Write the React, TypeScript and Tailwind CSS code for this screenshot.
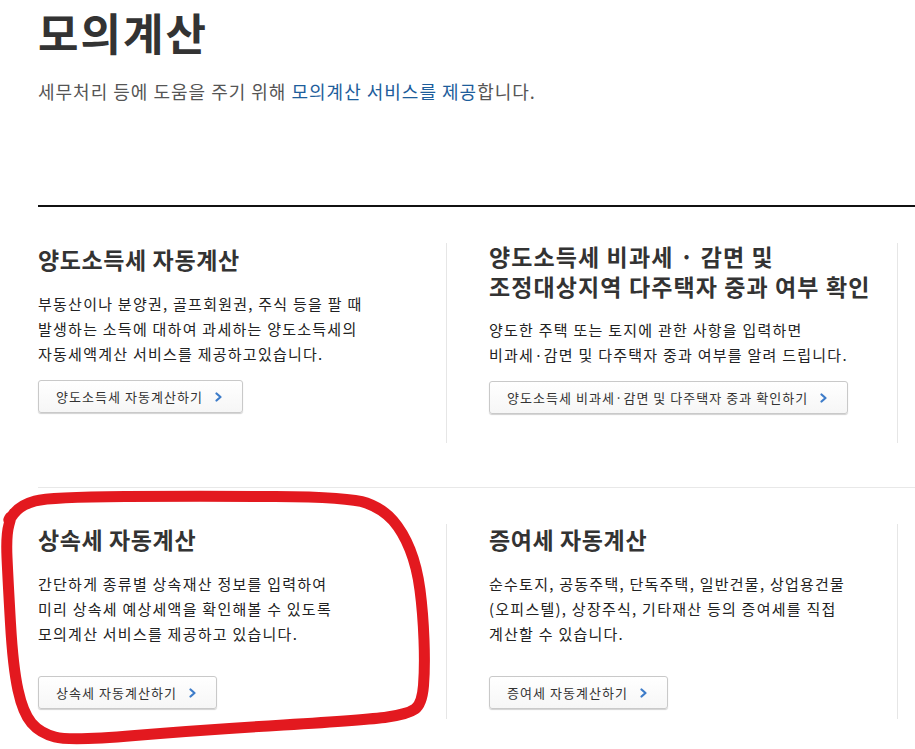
import React from 'react';

const font = { fontFamily: '"Noto Sans CJK KR", "Noto Sans", sans-serif' };

// freehand red mark drawn over the lower-left card
const markPoints: [number, number][] = [
  [7, 523], [20, 505], [50, 497], [200, 496], [350, 497], [383, 509], [403, 532],
  [417, 567], [423, 613], [425, 667], [422, 704], [408, 714], [367, 720], [200, 730],
  [70, 741], [40, 733], [23, 713], [13, 667], [8, 580], [6, 535], [12, 514],
];

const smoothPath = (pts: [number, number][]) => {
  let d = `M ${(pts[0][0] + pts[1][0]) / 2} ${(pts[0][1] + pts[1][1]) / 2}`;
  for (let i = 1; i <= pts.length; i++) {
    const p = pts[i % pts.length];
    const n = pts[(i + 1) % pts.length];
    d += ` Q ${p[0]} ${p[1]} ${(p[0] + n[0]) / 2} ${(p[1] + n[1]) / 2}`;
  }
  return d;
};

const Chevron = () => (
  <svg width="8" height="10" viewBox="0 0 8 10" className="ml-[12px]">
    <polyline points="1.5,1.5 5.5,5 1.5,8.5" fill="none" stroke="#3d7cc9" strokeWidth="2.2" strokeLinecap="round" strokeLinejoin="round" />
  </svg>
);

const CalcButton: React.FC<{ label: string }> = ({ label }) => (
  <button className="inline-flex items-center h-[33px] pl-[17px] pr-[19px] border border-[#c9c9c9] rounded-[3px] bg-gradient-to-b from-white to-[#f6f6f6] shadow-[0_1px_1px_rgba(0,0,0,0.18)] text-[13px] text-[#333] tracking-[1.05px]">
    {label}
    <Chevron />
  </button>
);

const App: React.FC = () => {
  return (
    <div className="relative w-[915px] h-[749px] overflow-hidden bg-white text-[#222]" style={font}>
      <div className="pl-[38px]">
        <h1 className="text-[44px] leading-[64px] font-bold text-[#333] tracking-[2px]">모의계산</h1>
        <p className="mt-[13px] text-[18px] leading-[28px] text-[#555] tracking-[1px]">
          세무처리 등에 도움을 주기 위해 <span className="text-[#1d5d9b]">모의계산 서비스를 제공</span>합니다.
        </p>

        <div className="mt-[100px] h-[2px] bg-[#111]" />

        {/* top row */}
        <div className="flex mt-[36px]">
          <div className="w-[409px] border-r border-[#e6e6e6] pb-[30px]">
            <h2 className="mt-[1px] text-[23px] leading-[30px] font-bold text-[#333] tracking-[0.6px]">양도소득세 자동계산</h2>
            <p className="mt-[17px] text-[15px] leading-[25px] tracking-[1.25px]">
              부동산이나 분양권, 골프회원권, 주식 등을 팔 때<br />
              발생하는 소득에 대하여 과세하는 양도소득세의<br />
              자동세액계산 서비스를 제공하고있습니다.
            </p>
            <div className="mt-[14px]">
              <CalcButton label="양도소득세 자동계산하기" />
            </div>
          </div>
          <div className="w-[451px] pl-[42px] border-r border-[#e6e6e6]">
            <h2 className="-mt-[2px] text-[23px] leading-[30px] font-bold text-[#333] tracking-[1.1px]">
              양도소득세 비과세 · 감면 및<br />
              조정대상지역 다주택자 중과 여부 확인
            </h2>
            <p className="mt-[16px] text-[15px] leading-[25px] tracking-[1.25px]">
              양도한 주택 또는 토지에 관한 사항을 입력하면<br />
              비과세·감면 및 다주택자 중과 여부를 알려 드립니다.
            </p>
            <div className="mt-[14px]">
              <CalcButton label="양도소득세 비과세·감면 및 다주택자 중과 확인하기" />
            </div>
          </div>
        </div>

        <div className="mt-[44px] h-px bg-[#e8e8e8]" />

        {/* bottom row */}
        <div className="flex mt-[36px]">
          <div className="w-[409px] border-r border-[#e6e6e6] pb-[10px]">
            <h2 className="text-[23px] leading-[30px] font-bold text-[#333] tracking-[0.6px]">상속세 자동계산</h2>
            <p className="mt-[17px] text-[15px] leading-[25px] tracking-[1.25px]">
              간단하게 종류별 상속재산 정보를 입력하여<br />
              미리 상속세 예상세액을 확인해볼 수 있도록<br />
              모의계산 서비스를 제공하고 있습니다.
            </p>
            <div className="mt-[30px]">
              <CalcButton label="상속세 자동계산하기" />
            </div>
          </div>
          <div className="w-[451px] pl-[42px] border-r border-[#e6e6e6]">
            <h2 className="text-[23px] leading-[30px] font-bold text-[#333] tracking-[0.6px]">증여세 자동계산</h2>
            <p className="mt-[17px] text-[15px] leading-[25px] tracking-[1.25px]">
              순수토지, 공동주택, 단독주택, 일반건물, 상업용건물<br />
              (오피스텔), 상장주식, 기타재산 등의 증여세를 직접<br />
              계산할 수 있습니다.
            </p>
            <div className="mt-[30px]">
              <CalcButton label="증여세 자동계산하기" />
            </div>
          </div>
        </div>
      </div>

      <svg className="absolute inset-0 pointer-events-none" width="915" height="749" viewBox="0 0 915 749">
        <path d={smoothPath(markPoints)} fill="none" stroke="#e3191f" strokeWidth="11" strokeLinecap="round" strokeLinejoin="round" />
      </svg>
    </div>
  );
};

export default App;
